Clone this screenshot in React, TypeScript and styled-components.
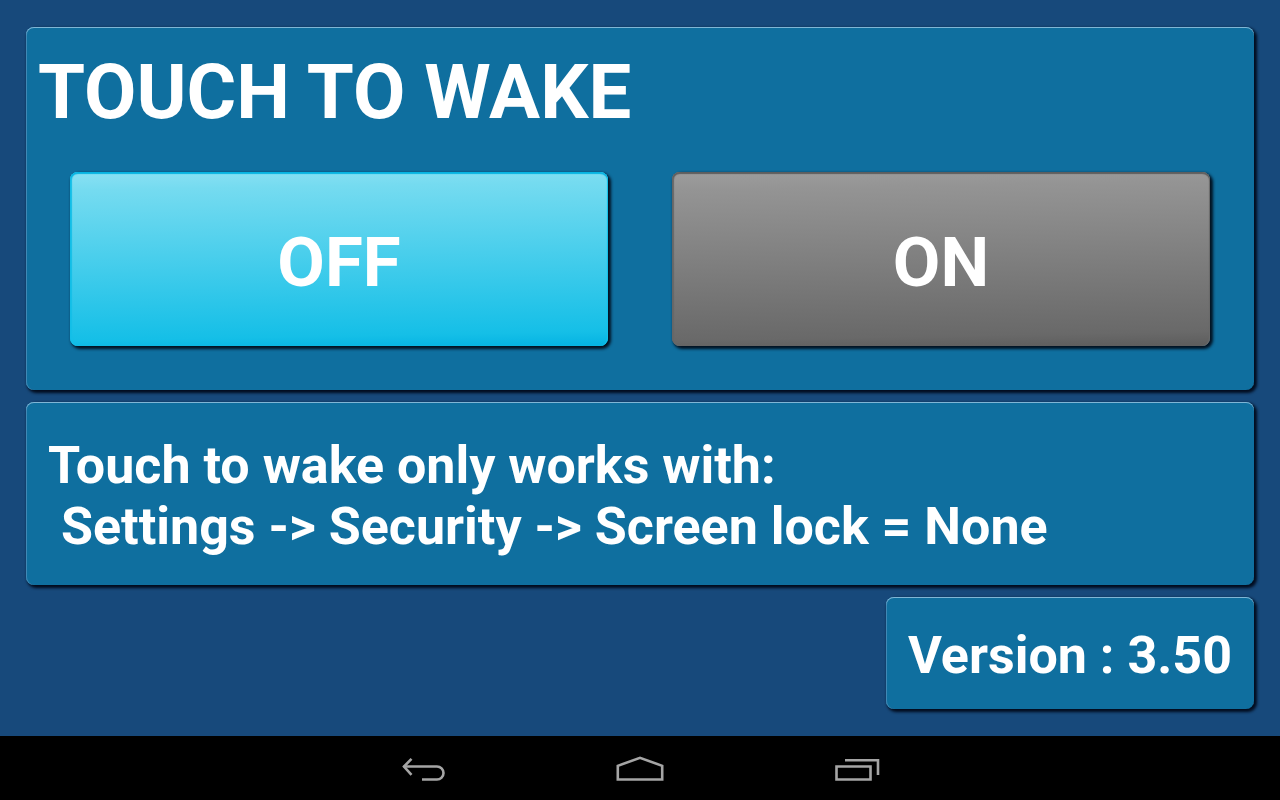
import React, { useState } from "react";
import styled, { createGlobalStyle } from "styled-components";

const GlobalStyle = createGlobalStyle`
  * { box-sizing: border-box; }
  body {
    margin: 0;
    background: #17497b;
    color: #fff;
    font-family: Roboto, "Liberation Sans", sans-serif;
    font-weight: 700;
  }
`;

const Screen = styled.div`
  display: flex;
  flex-direction: column;
  min-height: 100vh;
`;

const Content = styled.main`
  flex: 1;
  display: flex;
  flex-direction: column;
  gap: 12px;
  padding: 27px 26px;
`;

const Panel = styled.section`
  background: #0f6f9f;
  border-radius: 8px;
  box-shadow:
    inset 0 1px 0 #7fb6d6,
    inset 1px 0 0 #4089b6,
    2px 2px 3px 1px rgba(0, 8, 24, 0.95);
`;

const SwitchPanel = styled(Panel)`
  padding: 21px 12px 44px;
`;

const Title = styled.h1`
  margin: 0 0 35px;
  font-size: 76px;
  line-height: 89px;
`;

const Choices = styled.div`
  display: grid;
  grid-template-columns: 1fr 1fr;
  gap: 64px;
  padding: 0 32px;
`;

const ChoiceButton = styled.button<{ $active: boolean }>`
  height: 174px;
  padding: 6px 0 0;
  border: 0;
  border-radius: 8px;
  color: #fff;
  font: inherit;
  font-size: 69px;
  cursor: pointer;
  background: ${({ $active }) =>
    $active
      ? "linear-gradient(179deg, #88e0f3 1%, #75dbf0 10%, #15bfe7 92%, #06b4e3 99%)"
      : "linear-gradient(179deg, #9c9c9c 1%, #949494 10%, #696969 92%, #5e5e5e 99%)"};
  box-shadow:
    inset 0 2px 1px ${({ $active }) => ($active ? "#06b4e2" : "#5e5e5e")},
    inset 2px 0 1px ${({ $active }) => ($active ? "#14bfe8" : "#686868")},
    inset -1px 0 1px ${({ $active }) => ($active ? "#14c4ec" : "#6c6c6c")},
    2px 2px 3px 1px rgba(0, 8, 20, 0.9);
`;

const NotePanel = styled(Panel)`
  padding: 33px 22px 28px;
`;

const VersionPanel = styled(Panel)`
  align-self: flex-end;
  padding: 28px 22px 23px;
`;

const Text = styled.p`
  margin: 0;
  font-size: 52px;
  line-height: 61px;
  white-space: pre-wrap;
`;

const NavBar = styled.nav`
  display: flex;
  justify-content: center;
  align-items: center;
  gap: 152px;
  height: 64px;
  background: #000;
`;

const NavButton = styled.button`
  display: flex;
  padding: 0;
  border: 0;
  background: none;
  color: #a5a5a5;
  cursor: pointer;
`;

function NavIcon({ d }: { d: string[] }) {
  return (
    <svg width="64" height="40" viewBox="0 0 64 40" fill="none" stroke="currentColor" strokeWidth="2.6" aria-hidden="true">
      {d.map((path) => (
        <path key={path} d={path} />
      ))}
    </svg>
  );
}

export default function App() {
  const [enabled, setEnabled] = useState(false);
  return (
    <Screen>
      <GlobalStyle />
      <Content>
        <SwitchPanel>
          <Title>TOUCH TO WAKE</Title>
          <Choices>
            <ChoiceButton type="button" $active={!enabled} aria-pressed={!enabled} onClick={() => setEnabled(false)}>
              OFF
            </ChoiceButton>
            <ChoiceButton type="button" $active={enabled} aria-pressed={enabled} onClick={() => setEnabled(true)}>
              ON
            </ChoiceButton>
          </Choices>
        </SwitchPanel>
        <NotePanel>
          <Text>{"Touch to wake only works with:\n Settings -> Security -> Screen lock = None"}</Text>
        </NotePanel>
        <VersionPanel>
          <Text>Version : 3.50</Text>
        </VersionPanel>
      </Content>
      <NavBar aria-label="System navigation">
        <NavButton type="button" aria-label="Back">
          <NavIcon d={["M11.5 18.5H45A6.5 6.5 0 0 1 45 31.5H30", "M19.5 10.8L12 18.5L19.5 26.8"]} />
        </NavButton>
        <NavButton type="button" aria-label="Home">
          <NavIcon d={["M9.8 31.5V17.8L32 9.8L54.2 17.8V31.5Z"]} />
        </NavButton>
        <NavButton type="button" aria-label="Recent apps">
          <NavIcon d={["M12.5 18.5H46.5V31.5H12.5Z", "M21 12.2H54V27"]} />
        </NavButton>
      </NavBar>
    </Screen>
  );
}
